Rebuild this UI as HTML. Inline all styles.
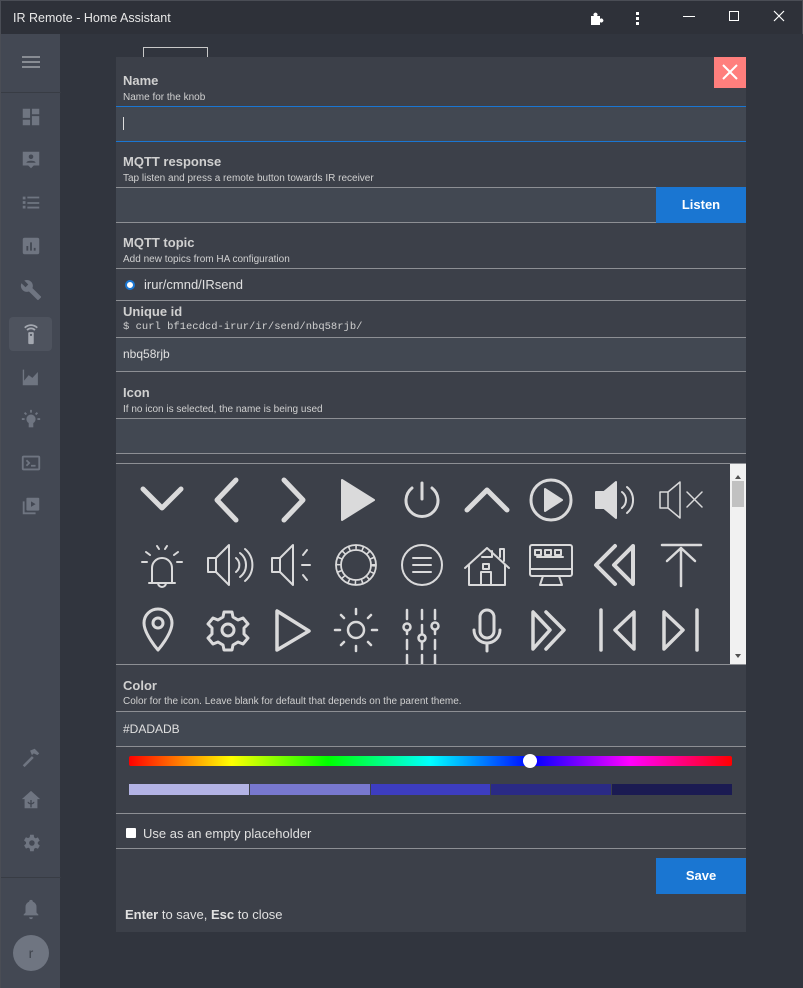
<!DOCTYPE html>
<html><head><meta charset="utf-8"><style>
*{box-sizing:border-box;margin:0;padding:0}
body{width:803px;height:988px;background:#31353e;font-family:"Liberation Sans",sans-serif;color:#e0e0e0;position:relative;overflow:hidden}
.tb{position:absolute;left:0;top:0;width:803px;height:34px;background:#2e3139;border:1px solid #4a4d55;border-bottom:none}
.tb .t{position:absolute;left:12px;top:10px;font-size:12.5px;color:#e8e8e8}
.side{position:absolute;left:0;top:34px;width:60px;height:954px;background:#434853;border-left:1px solid #4a4d55}
.si{position:absolute;left:19px;width:22px;height:22px}
.dlg{position:absolute;left:116px;top:57px;width:630px;height:875px;background:#3c4049}
.lbl{position:absolute;left:7px;font-size:13px;font-weight:bold;color:#d0d0d0}
.sub{position:absolute;left:7px;font-size:10px;color:#d0d0d0}
.fld{position:absolute;left:0;width:630px;background:#424852;border-top:1px solid #8d8f94;border-bottom:1px solid #8d8f94}
.txt{position:absolute;left:7px;font-size:12px;color:#e0e0e0}
.btn{position:absolute;background:#1a76d2;color:#fff;font-weight:bold;font-size:13px;text-align:center}
</style></head><body>
<div class="tb"><div class="t">IR Remote - Home Assistant</div>
<svg style="position:absolute;left:588px;top:9px" width="16" height="16" viewBox="0 0 16 16"><path d="M2 6h3a2 2 0 1 1 3 0h3v3a2 2 0 1 1 0 3v3H2z" fill="#fff"/></svg>
<div style="position:absolute;left:635px;top:11px;width:3px;height:3px;background:#fff;box-shadow:0 5px 0 #fff,0 10px 0 #fff"></div>
<div style="position:absolute;left:682px;top:15px;width:12px;height:1px;background:#fff"></div>
<div style="position:absolute;left:728px;top:10px;width:10px;height:10px;border:1px solid #fff"></div>
<svg style="position:absolute;left:772px;top:9px" width="12" height="12"><path d="M1 1L11 11M11 1L1 11" stroke="#fff" stroke-width="1.2"/></svg>
</div>
<div class="side">
<div style="position:absolute;left:21px;top:22px;width:18px;height:2px;background:#888c93;box-shadow:0 5px 0 #888c93,0 10px 0 #888c93"></div>
<div style="position:absolute;left:0;top:58px;width:60px;height:1px;background:#383c44"></div>
<svg class="si" style="top:72px" viewBox="0 0 24 24" fill="#6f7581"><path d="M3 3h8v10H3zM13 3h8v6h-8zM13 11h8v10h-8zM3 15h8v6H3z"/></svg>
<svg class="si" style="top:115px" viewBox="0 0 24 24" fill="#6f7581"><path d="M3 3h18v15h-6l-3 3-3-3H3z"/><circle cx="12" cy="8.5" r="2.5" fill="#434853"/><path d="M7 15c0-3 10-3 10 0z" fill="#434853"/></svg>
<svg class="si" style="top:158px" viewBox="0 0 24 24" fill="#6f7581"><path d="M3 5h3v3H3zM3 10h3v3H3zM3 15h3v3H3zM8 5h13v2H8zM8 11h13v2H8zM8 16h13v2H8z"/></svg>
<svg class="si" style="top:201px" viewBox="0 0 24 24" fill="#6f7581"><rect x="3" y="3" width="18" height="18" rx="2"/><path d="M7 12h2v5H7zM11 8h2v9h-2zM15 14h2v3h-2z" fill="#434853"/></svg>
<svg class="si" style="top:245px" viewBox="0 0 24 24" fill="#6f7581"><path d="M22.7 19l-9.1-9.1c.9-2.3.4-5-1.5-6.9-2-2-5-2.4-7.4-1.3L9 6 6 9 1.6 4.7C.4 7.1.9 10.1 2.9 12.1c1.9 1.9 4.6 2.4 6.9 1.5l9.1 9.1c.4.4 1 .4 1.4 0l2.3-2.3c.5-.4.5-1.1.1-1.4z"/></svg>
<div style="position:absolute;left:8px;top:283px;width:43px;height:34px;background:#4e535e;border-radius:4px"></div>
<svg class="si" style="top:289px" viewBox="0 0 24 24" fill="#a4a8b0"><rect x="9" y="10" width="6" height="13" rx="1"/><circle cx="12" cy="13" r="1.2" fill="#4e535e"/><path d="M7 7a7 7 0 0 1 10 0l-1.4 1.4a5 5 0 0 0-7.2 0zM4.5 4.5a10.5 10.5 0 0 1 15 0l-1.4 1.4a8.5 8.5 0 0 0-12.2 0z"/></svg>
<svg class="si" style="top:332px" viewBox="0 0 24 24" fill="#6f7581"><path d="M3 21V4h1.5v12l5-6 4 3 6-6.5V21z"/></svg>
<svg class="si" style="top:375px" viewBox="0 0 24 24" fill="#6f7581"><circle cx="12" cy="11" r="5"/><rect x="9.5" y="15" width="5" height="5"/><path d="M2 11h3M19 11h3M5 4l2 2M19 4l-2 2M12 1v3" stroke="#6f7581" stroke-width="2"/></svg>
<svg class="si" style="top:418px" viewBox="0 0 24 24" fill="none" stroke="#6f7581" stroke-width="2"><rect x="3" y="5" width="18" height="14" rx="1"/><path d="M7 9l3 3-3 3M12 15h5"/></svg>
<svg class="si" style="top:461px" viewBox="0 0 24 24" fill="#6f7581"><rect x="7" y="3" width="14" height="14" rx="1"/><path d="M4 7v13h13" stroke="#6f7581" stroke-width="2" fill="none"/><path d="M12 7l5 3-5 3z" fill="#434853"/></svg>
<svg class="si" style="top:712px" viewBox="0 0 24 24" fill="#6f7581"><path d="M3 21l10-10 2 2L5 23zM11 5l5-2 5 5-2 2-4-2-2 2z"/></svg>
<svg class="si" style="top:755px" viewBox="0 0 24 24" fill="#6f7581"><path d="M12 2l10 9h-3v10H5V11H2z"/><path d="M12 12v8M9 14c0 2 3 2 3 2s3 0 3-2" stroke="#434853" stroke-width="1.5" fill="none"/></svg>
<svg class="si" style="top:798px" viewBox="0 0 24 24" fill="#6f7581"><path d="M19.4 13a7.5 7.5 0 0 0 0-2l2.1-1.6-2-3.5-2.5 1a7 7 0 0 0-1.700-1L15 3h-4l-.4 2.7a7 7 0 0 0-1.7 1l-2.5-1-2 3.5L6.6 11a7.5 7.5 0 0 0 0 2l-2.1 1.6 2 3.5 2.5-1a7 7 0 0 0 1.7 1L11 21h4l.4-2.7a7 7 0 0 0 1.7-1l2.5 1 2-3.5z"/><circle cx="13" cy="12" r="3" fill="#434853"/></svg>
<div style="position:absolute;left:0;top:843px;width:60px;height:1px;background:#383c44"></div>
<svg class="si" style="top:864px" viewBox="0 0 24 24" fill="#6f7581"><path d="M12 2a2 2 0 0 1 2 2 6 6 0 0 1 4 6v6l2 2v1H4v-1l2-2v-6a6 6 0 0 1 4-6 2 2 0 0 1 2-2zM10 21h4a2 2 0 0 1-4 0z"/></svg>
<div style="position:absolute;left:12px;top:901px;width:36px;height:36px;border-radius:50%;background:#6f7581;color:#3f434c;font-size:14px;text-align:center;line-height:36px">r</div>
</div>
<div style="position:absolute;left:143px;top:47px;width:65px;height:12px;border:1px solid #c8c8c8;border-bottom:none"></div>
<div class="dlg">
<div style="position:absolute;left:598px;top:0;width:32px;height:31px;background:#ff7f7d"></div>
<svg style="position:absolute;left:606px;top:7px" width="16" height="16"><path d="M1 1L15 15M15 1L1 15" stroke="#fff" stroke-width="2"/></svg>
<div class="lbl" style="top:16px">Name</div><div class="sub" style="top:35px">Name for the knob</div>
<div class="fld" style="top:49px;height:36px;border-color:#1a76d2"></div>
<div style="position:absolute;left:7px;top:60px;width:1px;height:13px;background:#ddd"></div>
<div class="lbl" style="top:97px">MQTT response</div><div class="sub" style="top:116px">Tap listen and press a remote button towards IR receiver</div>
<div class="fld" style="top:130px;height:36px"></div>
<div class="btn" style="left:540px;top:130px;width:90px;height:36px;line-height:36px">Listen</div>
<div class="lbl" style="top:178px">MQTT topic</div><div class="sub" style="top:197px">Add new topics from HA configuration</div>
<div style="position:absolute;left:0;top:211px;width:630px;height:1px;background:#8d8f94"></div>
<div style="position:absolute;left:9px;top:223px;width:10px;height:10px;border-radius:50%;border:2px solid #1a76d2;background:#fff"></div>
<div style="position:absolute;left:28px;top:220px;font-size:13px;color:#e0e0e0">irur/cmnd/IRsend</div>
<div style="position:absolute;left:0;top:243px;width:630px;height:1px;background:#8d8f94"></div>
<div class="lbl" style="top:247px">Unique id</div>
<div class="sub" style="top:264px;font-family:'Liberation Mono',monospace;font-size:10.5px">$ curl bf1ecdcd-irur/ir/send/nbq58rjb/</div>
<div class="fld" style="top:280px;height:35px"></div>
<div class="txt" style="top:290px">nbq58rjb</div>
<div class="lbl" style="top:328px">Icon</div><div class="sub" style="top:347px">If no icon is selected, the name is being used</div>
<div class="fld" style="top:361px;height:36px"></div>
<div style="position:absolute;left:0;top:406px;width:630px;height:1px;background:#8d8f94"></div>
<div style="position:absolute;left:0;top:607px;width:630px;height:1px;background:#8d8f94"></div>
<div style="position:absolute;left:614px;top:407px;width:16px;height:200px;background:#f1f1f1"></div>
<div style="position:absolute;left:616px;top:424px;width:12px;height:26px;background:#c1c1c1"></div>
<svg style="position:absolute;left:614px;top:407px" width="16" height="200"><path d="M5 15l3-4 3 4zM5 190l3 4 3-4z" fill="#505050"/></svg>
<svg style="position:absolute;left:0;top:407px" width="614" height="200" viewBox="116 464 614 200" fill="none" stroke="#dadadb" stroke-width="5" stroke-linecap="round" stroke-linejoin="round">
<path d="M143 489l19 19 19-19"/>
<path d="M236 480l-19 20 19 20"/>
<path d="M284 480l19 20-19 20"/>
<path d="M342 480v40l32-20z" fill="#dadadb" stroke-width="2"/>
<path d="M422 483v16" stroke-width="3"/><path d="M412 488a16 16 0 1 0 20 0" stroke-width="3"/>
<path d="M467 510l20-20 20 20"/>
<circle cx="551" cy="500" r="20" stroke-width="3"/><path d="M545 489v22l17-11z" fill="#dadadb" stroke-width="2"/>
<path d="M596 492h8l12-10v36l-12-10h-8z" fill="#dadadb" stroke-width="2"/><path d="M622 492a10 10 0 0 1 0 16M627 487a17 17 0 0 1 0 26" stroke-width="2"/>
<path d="M660 492h8l12-10v36l-12-10h-8zM668 492v16M687 492l15 15M702 492l-15 15" stroke-width="1.5"/>
<path d="M149 583h26M152 583v-15a10 10 0 0 1 20 0v15M158 583a4 4 0 0 0 8 0M142 562h5M177 562h5M146 552l4 3M178 552l-4 3M157 546l2 3M167 546l-2 3" stroke-width="2"/>
<path d="M208 558h8l13-13v40l-13-13h-8zM216 558v14M236 558a9 9 0 0 1 0 14M240 553a15 15 0 0 1 0 24M245 549a21 21 0 0 1 0 32" stroke-width="2"/>
<path d="M272 558h8l13-13v40l-13-13h-8zM280 558v14M303 555l4-5M302 565h8M303 575l4 5" stroke-width="2"/>
<circle cx="356" cy="565" r="20" stroke-width="1.8"/><circle cx="356" cy="565" r="15" stroke-width="1.8"/><circle cx="356" cy="565" r="17.5" stroke-width="5" stroke-linecap="butt" stroke-dasharray="1.6 5.2"/>
<circle cx="422" cy="565" r="20" stroke-width="2"/><path d="M413 558h18M413 565h18M413 572h18" stroke-width="2"/>
<path d="M465 568l22-20 22 20M469 565v20h36v-20M481 585v-13h10v13M482 557h10v-6M500 557v-8h4v12" stroke-width="2"/><rect x="483" y="564" width="6" height="5" stroke-width="2"/>
<rect x="530" y="545" width="42" height="31" rx="2" stroke-width="2"/><path d="M530 569h42M543 576l-3 9h22l-3-9M537 557h26" stroke-width="2"/><rect x="535" y="550" width="6" height="5" stroke-width="2"/><rect x="545" y="550" width="6" height="5" stroke-width="2"/><rect x="555" y="550" width="6" height="5" stroke-width="2"/>
<path d="M615 546l-19 19 19 19M633 546l-19 19 19 19v-38z" stroke-width="4"/>
<path d="M662 545h39M681 586v-38M667 561l14-13 14 13" stroke-width="2.5"/>
<path d="M158 650s-14-16-14-27a14 14 0 0 1 28 0c0 11-14 27-14 27z" stroke-width="3"/><circle cx="158" cy="623" r="5" stroke-width="3"/>
<path d="M224 612h8l1 5 5 3 5-2 5 6-4 4v6l4 4-5 6-5-2-5 3-1 5h-8l-1-5-5-3-5 2-5-6 4-4v-6l-4-4 5-6 5 2 5-3z" stroke-width="3"/><circle cx="228" cy="630" r="6" stroke-width="3"/>
<path d="M277 611v39l32-19z" stroke-width="3.5"/>
<circle cx="356" cy="630" r="8" stroke-width="2.5"/><path d="M356 614v-5M356 646v5M340 630h-5M372 630h5M344 618l-3-3M368 642l3 3M368 618l3-3M344 642l-3 3" stroke-width="2.5"/>
<path d="M407 610v55M422 610v56M435 610v56" stroke-width="2.5" stroke-dasharray="9 6"/><circle cx="407" cy="627" r="3.5" fill="#3c4049" stroke-width="2.5"/><circle cx="422" cy="638" r="3.5" fill="#3c4049" stroke-width="2.5"/><circle cx="435" cy="626" r="3.5" fill="#3c4049" stroke-width="2.5"/>
<rect x="480" y="610" width="14" height="28" rx="7" stroke-width="3"/><path d="M474 630a13 13 0 0 0 26 0M487 643v8" stroke-width="3"/>
<path d="M533 612v37l17-19zM546 612l18 18-18 19" stroke-width="3.5"/>
<path d="M601 610v40M634 612v37l-19-19z" stroke-width="3.5"/>
<path d="M697 610v40M664 612v37l19-19z" stroke-width="3.5"/>
</svg>
<div class="lbl" style="top:621px">Color</div><div class="sub" style="top:639px">Color for the icon. Leave blank for default that depends on the parent theme.</div>
<div class="fld" style="top:654px;height:36px"></div>
<div class="txt" style="top:665px">#DADADB</div>
<div style="position:absolute;left:13px;top:699px;width:603px;height:10px;border-radius:2px;background:linear-gradient(90deg,#f00,#ff0 17%,#0f0 33%,#0ff 50%,#00f 67%,#f0f 83%,#f00)"></div>
<div style="position:absolute;left:407px;top:697px;width:14px;height:14px;border-radius:50%;background:#fff"></div>
<div style="position:absolute;left:13px;top:727px;width:603px;height:11px;display:flex;gap:1px">
<div style="flex:1;background:#b3b3e5"></div><div style="flex:1;background:#7878cf"></div><div style="flex:1;background:#3d3dc0"></div><div style="flex:1;background:#2a2a85"></div><div style="flex:1;background:#1b1b52"></div></div>
<div style="position:absolute;left:0;top:756px;width:630px;height:1px;background:#8d8f94"></div>
<div style="position:absolute;left:10px;top:771px;width:10px;height:10px;background:#fff;border-radius:1px"></div>
<div style="position:absolute;left:27px;top:769px;font-size:13px;color:#e0e0e0">Use as an empty placeholder</div>
<div style="position:absolute;left:0;top:791px;width:630px;height:1px;background:#8d8f94"></div>
<div class="btn" style="left:540px;top:801px;width:90px;height:36px;line-height:36px">Save</div>
<div style="position:absolute;left:9px;top:850px;font-size:13px;color:#e0e0e0"><b>Enter</b> to save, <b>Esc</b> to close</div>
</div>
</body></html>
